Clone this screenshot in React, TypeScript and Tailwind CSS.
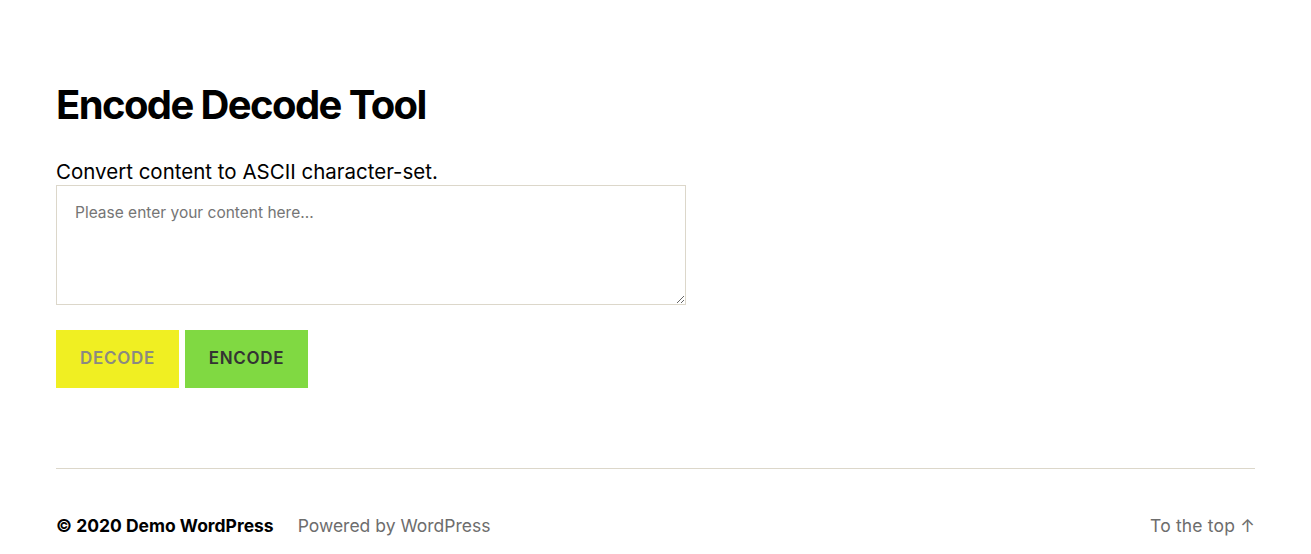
export default function App() {
  return (
    <div className="min-h-[554px] bg-white text-black" style={{ fontFamily: "Inter, 'Noto Sans', sans-serif" }}>
      <main className="px-[56px] pt-[81px]">
        <h1 className="text-[40px] font-bold leading-[1.2] tracking-[-0.04em]">Encode Decode Tool</h1>
        <p className="mt-[31px] text-[20.5px] leading-[1.2]">Convert content to ASCII character-set.</p>
        <textarea
          className="block w-[630px] h-[120px] border border-[#dcd7ca] px-[18px] py-[15px] text-[15.5px] leading-[1.5] placeholder:text-[#757575] outline-none"
          placeholder="Please enter your content here..."
        />
        <div className="mt-[25px] flex gap-[6px]">
          <button className="w-[123px] h-[58px] bg-[#f0ef22] text-[#8a8a80] text-[17px] font-semibold tracking-[0.04em]">DECODE</button>
          <button className="w-[123px] h-[58px] bg-[#80d942] text-[#333333] text-[17px] font-semibold tracking-[0.04em]">ENCODE</button>
        </div>
      </main>
      <footer className="mx-[56px] mt-[80px] border-t border-[#dcd7ca] pt-[44px] flex items-center justify-between text-[17.5px]">
        <div className="flex items-baseline gap-[24px]">
          <span className="font-bold">© 2020 Demo WordPress</span>
          <span className="text-[#6d6d6d]">Powered by WordPress</span>
        </div>
        <span className="text-[#6d6d6d] tracking-[0.01em]">To the top ↑</span>
      </footer>
    </div>
  );
}
